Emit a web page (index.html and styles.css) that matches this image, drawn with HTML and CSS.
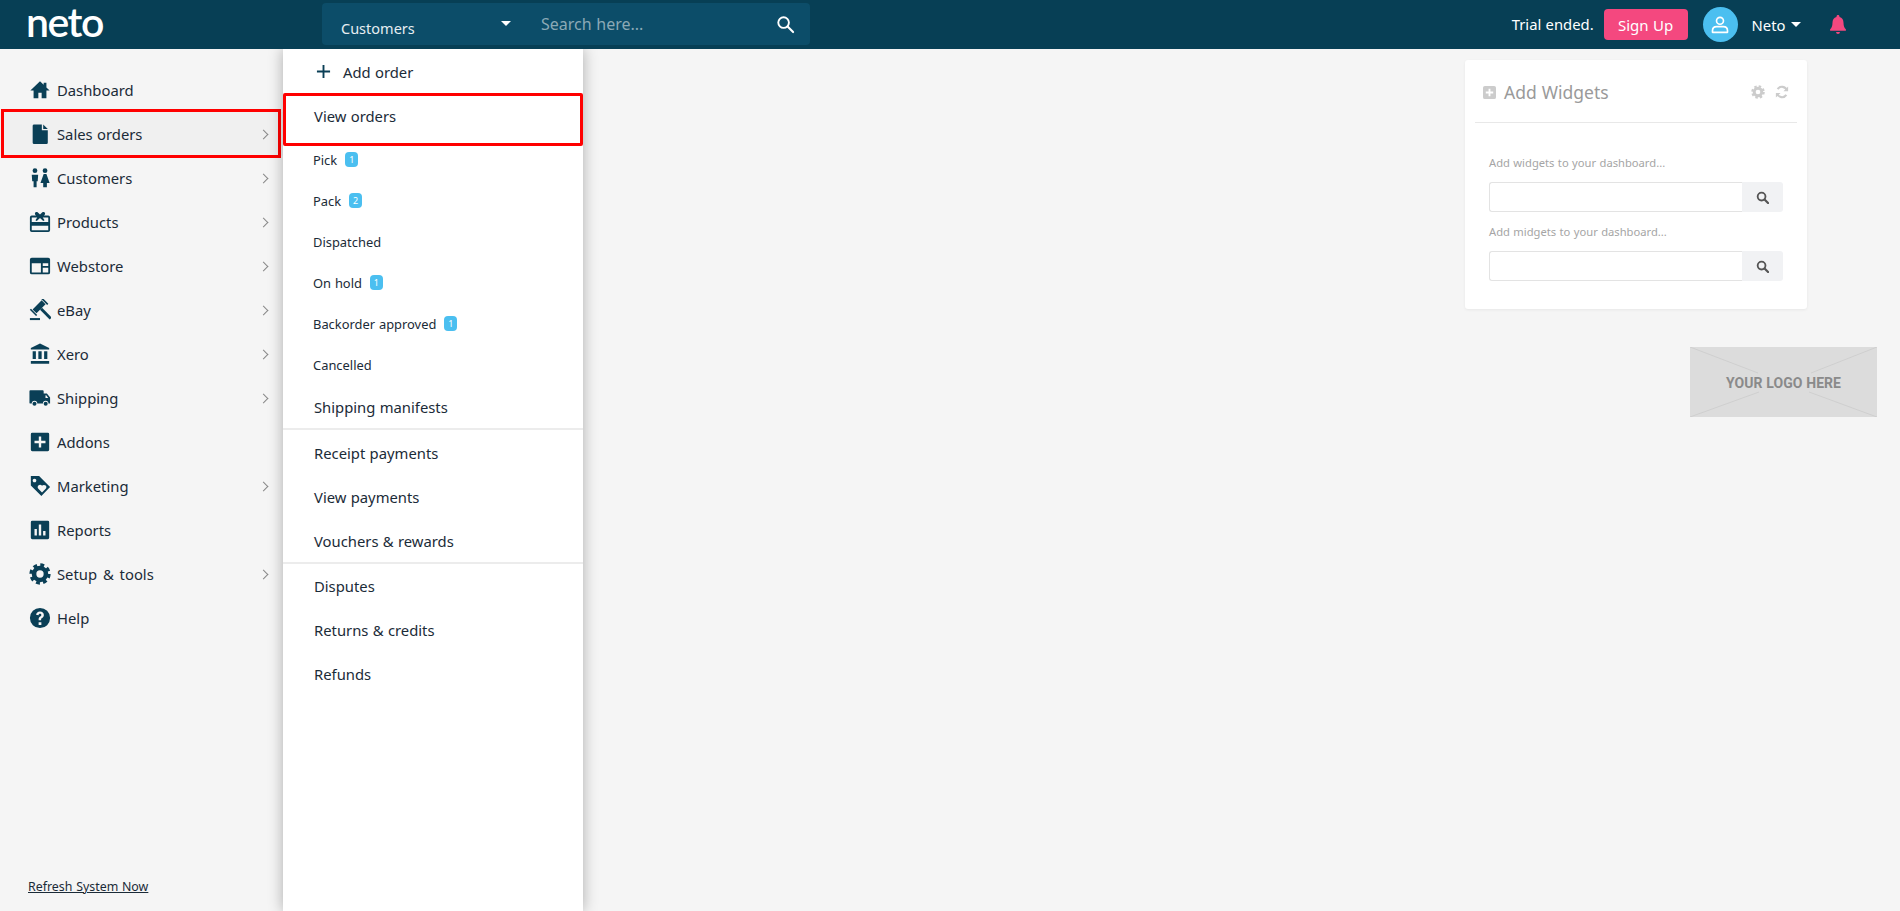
FILE: index.html
```html
<!DOCTYPE html>
<html lang="en">
<head>
<meta charset="utf-8">
<title>Neto</title>
<link rel="stylesheet" href="styles.css">
</head>
<body>
<header class="topbar">
  <div class="logo">neto</div>
  <div class="search">
    <div class="search-scope"><span>Customers</span><i class="caret scope-caret"></i></div>
    <div class="search-input">Search here...</div>
    <svg class="search-icon" viewBox="0 0 20 20"><circle cx="8" cy="8" r="5.6" fill="none" stroke="#fff" stroke-width="2"/><path d="M12.2 12.2 18 18" stroke="#fff" stroke-width="2.2" stroke-linecap="round"/></svg>
  </div>
  <div class="account">
    <span class="trial">Trial ended.</span>
    <a class="signup">Sign Up</a>
    <span class="avatar"><svg viewBox="0 0 24 24"><circle cx="12" cy="7.4" r="3.8" fill="none" stroke="#fff" stroke-width="1.8"/><path d="M3.8 20v-1.600c0-3 2-4.600 4.600-4.600h7.200c2.600 0 4.600 1.600 4.600 4.600V20z" fill="none" stroke="#fff" stroke-width="1.8" stroke-linejoin="round"/></svg></span>
    <span class="user">Neto</span><i class="caret user-caret"></i>
    <svg class="bell" viewBox="0 0 20 24"><path d="M10 1.200c1 0 1.700.7 1.700 1.700v.5c3.100.8 4.600 3.400 4.600 6.600 0 4 1 5.800 2.700 7.500v1.500H1v-1.500c1.700-1.700 2.700-3.500 2.700-7.500 0-3.200 1.500-5.800 4.600-6.600v-.5c0-1 .7-1.700 1.700-1.700z" fill="#f4487f"/><path d="M7.800 20.500h4.400c0 1.300-1 2.300-2.200 2.300s-2.200-1-2.200-2.300z" fill="#f4487f"/></svg>
  </div>
</header>

<div class="main">
  <aside class="sidebar">
    <nav class="nav">
      <a class="nav-item"><svg class="icon" viewBox="0 0 24 24"><path d="M12 2.500 1.500 12.500H5V21h5.200v-6h3.600v6H19v-8.500h3.500L19 9.200V4h-3v2.300z"/></svg><span>Dashboard</span></a>
      <a class="nav-item is-active has-sub"><svg class="icon" viewBox="0 0 24 24"><path d="M5.500 1.500H14v6.500h6.500v13.500a1.500 1.500 0 0 1-1.500 1.500H5.500A1.500 1.500 0 0 1 4 21.500V3a1.500 1.500 0 0 1 1.500-1.500zM15.500 1.500l5 5h-5z"/></svg><span>Sales orders</span></a>
      <a class="nav-item has-sub"><svg class="icon" viewBox="0 0 24 24"><circle cx="6.500" cy="4" r="2.600"/><circle cx="17.500" cy="4" r="2.600"/><path d="M3 8.500h7l-.5 7H8.300V22H5V15.500H3.500zM16 7.500h3l3.500 10h-3V22h-4v-4.500h-3z"/></svg><span>Customers</span></a>
      <a class="nav-item has-sub"><svg class="icon" viewBox="0 0 24 24"><path fill-rule="evenodd" d="M3 5h4.700C6.800 4.300 6.300 3.400 6.500 2.400 6.800 1 8.500.6 9.700 1.500L12 3.700l2.300-2.200c1.200-.9 2.900-.5 3.200.9.200 1-.3 1.900-1.200 2.600H21a2 2 0 0 1 2 2v14a2 2 0 0 1-2 2H3a2 2 0 0 1-2-2V7a2 2 0 0 1 2-2zm0 2v5h18V7h-6l2 3-1.500 1L12 7.500 8.500 11 7 10l2-3zm0 9v5h18v-5z"/></svg><span>Products</span></a>
      <a class="nav-item has-sub"><svg class="icon" viewBox="0 0 24 24"><path fill-rule="evenodd" d="M3 3h18a2 2 0 0 1 2 2v14a2 2 0 0 1-2 2H3a2 2 0 0 1-2-2V5a2 2 0 0 1 2-2zm0 6v10h10V9zm12 0v3h6V9zm0 5v5h6v-5z"/></svg><span>Webstore</span></a>
      <a class="nav-item has-sub"><svg class="icon" viewBox="0 0 24 24"><g transform="translate(11 8.500) rotate(45)"><rect x="-3" y="-7" width="6" height="14"/><rect x="-4.800" y="-9.500" width="9.600" height="1.800"/><rect x="-4.800" y="7.700" width="9.600" height="1.800"/><rect x="3" y="-1.600" width="15" height="3.200"/></g><rect x="1" y="20.800" width="11" height="2.200"/></svg><span>eBay</span></a>
      <a class="nav-item has-sub"><svg class="icon" viewBox="0 0 24 24"><path d="M12 .5 22 5.500v1.700H2V5.500zM4 9h3.500v8.500H4zM10.200 9h3.600v8.500h-3.600zM16.500 9H20v8.500h-3.500zM2 19.500h20V22.500H2z"/></svg><span>Xero</span></a>
      <a class="nav-item has-sub"><svg class="icon" viewBox="0 0 24 24"><path fill-rule="evenodd" d="M1.500 3.500H15a1 1 0 0 1 1 1V7h3.500l3.500 4.500V18h-1.800a3 3 0 0 0-6 0H9a3 3 0 0 0-6 0H1a.5.5 0 0 1-.5-.5V4.500a1 1 0 0 1 1-1zM18 9v3h3l-2.200-3z"/><circle cx="6" cy="18.200" r="2.200"/><circle cx="18.200" cy="18.200" r="2.200"/></svg><span>Shipping</span></a>
      <a class="nav-item"><svg class="icon" viewBox="0 0 24 24"><path fill-rule="evenodd" d="M3.500 2h17A1.500 1.500 0 0 1 22 3.500v17a1.500 1.500 0 0 1-1.500 1.500h-17A1.500 1.500 0 0 1 2 20.500v-17A1.500 1.500 0 0 1 3.500 2zM10.700 6v4.700H6v2.600h4.700V18h2.600v-4.700H18v-2.600h-4.700V6z"/></svg><span>Addons</span></a>
      <a class="nav-item has-sub"><svg class="icon" viewBox="0 0 24 24"><path fill-rule="evenodd" d="M2 1h9l12 12-9.500 10L2 11.500zM6 4a2 2 0 1 0 .01 0zM14 11.500c-1-1-2.800-1-3.800 0s-.9 2.600 0 3.500l4 4 4-4c1-1 1-2.600 0-3.500s-2.800-1-3.800 0l-.2.300z"/></svg><span>Marketing</span></a>
      <a class="nav-item"><svg class="icon" viewBox="0 0 24 24"><path fill-rule="evenodd" d="M3.500 2h17A1.500 1.500 0 0 1 22 3.500v17a1.500 1.500 0 0 1-1.500 1.500h-17A1.500 1.500 0 0 1 2 20.500v-17A1.500 1.500 0 0 1 3.500 2zM6 11v7h2.600v-7zM10.700 6v12h2.600V6zM15.400 13v5H18v-5z"/></svg><span>Reports</span></a>
      <a class="nav-item has-sub"><svg class="icon" viewBox="0 0 24 24"><circle cx="12" cy="12" r="6.500" fill="none" stroke="#0a3f56" stroke-width="5"/><circle cx="12" cy="12" r="9.800" fill="none" stroke="#0a3f56" stroke-width="3.600" stroke-dasharray="4.200 3.500"/></svg><span class="wide-gap">Setup &amp; tools</span></a>
      <a class="nav-item"><svg class="icon" viewBox="0 0 24 24"><path fill-rule="evenodd" d="M12 1a11 11 0 1 1 0 22 11 11 0 0 1 0-22zM10.500 16.500v3h3v-3zM12 5C9.500 5 8 6.400 7.700 8.500l2.700.4c.2-1 .7-1.500 1.600-1.500s1.500.5 1.500 1.300c0 .7-.4 1.100-1.200 1.700-1.300.9-1.800 1.700-1.800 3.100v1h2.700v-.7c0-.8.200-1.100 1.100-1.700 1.200-.8 1.900-1.800 1.900-3.300C16.200 6.300 14.500 5 12 5z"/></svg><span>Help</span></a>
    </nav>
    <a class="refresh">Refresh System Now</a>
  </aside>

  <section class="flyout">
    <a class="fly-row fly-add"><svg class="plus" viewBox="0 0 16 16"><path d="M8 1v14M1 8h14" stroke="#0a3f56" stroke-width="2"/></svg><span>Add order</span></a>
    <a class="fly-row fly-view">View orders</a>
    <a class="fly-sub">Pick<b class="badge">1</b></a>
    <a class="fly-sub">Pack<b class="badge">2</b></a>
    <a class="fly-sub">Dispatched</a>
    <a class="fly-sub">On hold<b class="badge">1</b></a>
    <a class="fly-sub">Backorder approved<b class="badge">1</b></a>
    <a class="fly-sub">Cancelled</a>
    <a class="fly-row fly-end fly-tall">Shipping manifests</a>
    <a class="fly-row fly-gap">Receipt payments</a>
    <a class="fly-row">View payments</a>
    <a class="fly-row fly-end fly-gap">Vouchers &amp; rewards</a>
    <a class="fly-row">Disputes</a>
    <a class="fly-row">Returns &amp; credits</a>
    <a class="fly-row">Refunds</a>
  </section>

  <section class="content">
    <div class="side-col">
      <div class="card">
        <div class="card-head">
          <svg class="card-ic" viewBox="0 0 14 14"><path fill-rule="evenodd" d="M2 0h10a2 2 0 0 1 2 2v10a2 2 0 0 1-2 2H2a2 2 0 0 1-2-2V2a2 2 0 0 1 2-2zM6 3v3H3v2h3v3h2V8h3V6H8V3z" fill="#ccc"/></svg>
          <span class="card-title">Add Widgets</span>
          <svg class="card-tool" viewBox="0 0 24 24"><circle cx="12" cy="12" r="6.500" fill="none" stroke="#ccc" stroke-width="5"/><circle cx="12" cy="12" r="9.800" fill="none" stroke="#ccc" stroke-width="3.600" stroke-dasharray="4.200 3.500"/></svg>
          <svg class="card-tool" viewBox="0 0 24 24"><path d="M20.500 9.500A9 9 0 0 0 4.500 7M3.500 14.500A9 9 0 0 0 19.500 17" fill="none" stroke="#ccc" stroke-width="3.600"/><path d="M22.500 2.500v8h-8zM1.500 21.500v-8h8z" fill="#ccc"/></svg>
        </div>
        <div class="card-body">
          <label class="field-label">Add widgets to your dashboard...</label>
          <div class="field"><div class="field-input"></div><div class="field-btn"><svg viewBox="0 0 14 14"><circle cx="6" cy="6" r="4.200" fill="none" stroke="#555" stroke-width="2"/><path d="M9.200 9.200 13 13" stroke="#555" stroke-width="2.400" stroke-linecap="round"/></svg></div></div>
          <label class="field-label">Add midgets to your dashboard...</label>
          <div class="field"><div class="field-input"></div><div class="field-btn"><svg viewBox="0 0 14 14"><circle cx="6" cy="6" r="4.200" fill="none" stroke="#555" stroke-width="2"/><path d="M9.200 9.200 13 13" stroke="#555" stroke-width="2.400" stroke-linecap="round"/></svg></div></div>
        </div>
      </div>
      <div class="logo-slot">
        <svg class="logo-x" viewBox="0 0 187 70" preserveAspectRatio="none"><path d="M0 0 68 26M187 0 121 26M0 70 69 45M187 70 119 45" stroke="#cfcfcf" stroke-width="1" fill="none"/></svg>
        <span>YOUR LOGO HERE</span>
      </div>
    </div>
  </section>
</div>
</body>
</html>
```
FILE: styles.css
```css
* { box-sizing: border-box; }
html, body { margin: 0; height: 911px; overflow: hidden; }
body {
  background: #f5f5f5;
  color: #1b2b38;
  font-family: "Noto Sans", "Open Sans", sans-serif;
  font-size: 14.8px;
  word-spacing: .5px;
  display: flex;
  flex-direction: column;
}
a { color: inherit; text-decoration: none; }

.topbar {
  height: 49px;
  flex: none;
  background: #073f55;
  color: #fff;
  display: flex;
  align-items: center;
  position: relative;
  z-index: 3;
}
.logo {
  width: 322px;
  padding-left: 26px;
  font-family: Lato, sans-serif;
  font-weight: 600;
  font-size: 41px;
  line-height: 49px;
  letter-spacing: -1.5px;
  margin-top: -7px;
}
.search {
  width: 488px;
  height: 42px;
  margin-top: -1px;
  background: #0c4d69;
  border-radius: 4px;
  display: flex;
  align-items: center;
}
.search-scope {
  width: 219px;
  padding-left: 19px;
  padding-right: 30px;
  display: flex;
  justify-content: space-between;
  align-items: center;
  font-size: 14.5px;
  color: #e6eef2;
}
.search-scope span { margin-top: 7px; }
.caret {
  display: block;
  width: 0;
  height: 0;
  border-left: 5px solid transparent;
  border-right: 5px solid transparent;
  border-top: 5px solid #fff;
}
.scope-caret { margin-top: -1px; }
.search-input { flex: 1; font-size: 16px; color: #8ba9b6; margin-top: 0; }
.search-icon { width: 19px; height: 19px; margin-right: 15px; }

.account { margin-left: auto; display: flex; align-items: center; padding-right: 53px; }
.trial { font-size: 14.8px; margin-right: 10px; margin-top: -1px; }
.signup {
  width: 84px;
  height: 31px;
  background: #f4487f;
  border-radius: 4px;
  display: flex;
  align-items: center;
  justify-content: center;
  font-size: 15px;
  margin-right: 15px;
}
.avatar {
  width: 35px;
  height: 35px;
  border-radius: 50%;
  background: #4bbff0;
  display: flex;
  align-items: center;
  justify-content: center;
  margin-right: 14px;
}
.avatar svg { width: 22px; height: 22px; }
.user { font-size: 14.8px; margin-right: 5px; }
.user-caret { margin-right: 28.5px; }
.bell { width: 18px; height: 21px; }

.main { flex: 1; display: flex; min-height: 0; }

.sidebar {
  width: 283px;
  flex: none;
  display: flex;
  flex-direction: column;
  padding-top: 19px;
}
.nav { display: flex; flex-direction: column; }
.nav-item {
  height: 44px;
  padding-left: 29px;
  display: flex;
  align-items: center;
  gap: 6px;
  position: relative;
}
.wide-gap { word-spacing: 2px; }
.icon { width: 22px; height: 22px; fill: #0a3f56; flex: none; }
.has-sub::before {
  content: "";
  position: absolute;
  left: 260px;
  top: 19px;
  width: 6px;
  height: 6px;
  border-top: 1.5px solid #888;
  border-right: 1.5px solid #888;
  transform: rotate(45deg);
}
.is-active { background: #f0f0f0; }
.is-active::after {
  content: "";
  position: absolute;
  left: 1px;
  right: 2px;
  top: -3px;
  bottom: -2px;
  border: 3px solid #f00;
}
.refresh {
  margin-top: auto;
  margin-left: 28px;
  margin-bottom: 15px;
  font-size: 12.4px;
  line-height: 18px;
  text-decoration: underline;
}

.flyout {
  width: 300px;
  flex: none;
  background: #fff;
  box-shadow: 0 0 14px rgba(0, 0, 0, .3);
  display: flex;
  flex-direction: column;
  position: relative;
  z-index: 2;
}
.fly-row {
  height: 44px;
  flex: none;
  padding-left: 31px;
  display: flex;
  align-items: center;
  position: relative;
}
.fly-tall { height: 45px; }
.fly-gap { margin-top: 1px; }
.fly-add { padding-left: 33px; gap: 12px; height: 45px; }
.fly-view { margin-top: 0; }
.plus { width: 15px; height: 15px; }
.fly-view::after {
  content: "";
  position: absolute;
  left: 0;
  right: 0;
  top: -1px;
  bottom: -8px;
  border: 3px solid #f00;
  border-radius: 2px;
}
.fly-sub {
  height: 41px;
  flex: none;
  padding-left: 30px;
  display: flex;
  align-items: center;
  font-size: 12.9px;
}
.fly-view + .fly-sub { margin-top: 1px; }
.badge {
  width: 13px;
  height: 15px;
  margin-left: 8px;
  border-radius: 4px;
  background: #4bbff0;
  color: #fff;
  font-size: 9px;
  font-weight: 400;
  display: flex;
  align-items: center;
  justify-content: center;
}
.fly-end { border-bottom: 2px solid #ececec; }

.content {
  flex: 1;
  padding: 11px 23px 0 0;
  display: flex;
  justify-content: flex-end;
}
.side-col { width: 412px; display: flex; flex-direction: column; }
.card {
  width: 342px;
  height: 249px;
  background: #fff;
  border-radius: 3px;
  box-shadow: 0 1px 3px rgba(0, 0, 0, .06);
}
.card-head {
  height: 63px;
  margin: 0 10px;
  padding: 2px 8px 0;
  border-bottom: 1px solid #e8e8e8;
  display: flex;
  align-items: center;
}
.card-ic { width: 13px; height: 13px; margin-right: 8px; }
.card-title { font-size: 17.5px; color: #9a9a9a; flex: 1; }
.card-tool { width: 14px; height: 14px; margin-left: 10px; }
.card-body { padding: 31px 24px 0; }
.field-label { display: block; height: 18px; line-height: 18px; font-size: 11.2px; color: #a5a5a5; margin-bottom: 10px; }
.field { display: flex; height: 30px; margin-bottom: 11px; }
.field-input { flex: 1; border: 1px solid #e3e3e3; border-right: 0; border-radius: 3px 0 0 3px; background: #fff; }
.field-btn { width: 41px; background: #f1f2f4; border-radius: 0 3px 3px 0; display: flex; align-items: center; justify-content: center; }
.field-btn svg { width: 13px; height: 13px; }
.logo-slot {
  width: 187px;
  height: 70px;
  margin-top: 38px;
  align-self: flex-end;
  background: #dcdcdc;
  position: relative;
  display: flex;
  align-items: center;
  justify-content: center;
  padding-top: 2px;
  color: #8a8a8a;
  font-family: Roboto, sans-serif;
  font-weight: 700;
  font-size: 14px;
}
.logo-x { position: absolute; inset: 0; width: 100%; height: 100%; }
.logo-slot span { position: relative; }
```
